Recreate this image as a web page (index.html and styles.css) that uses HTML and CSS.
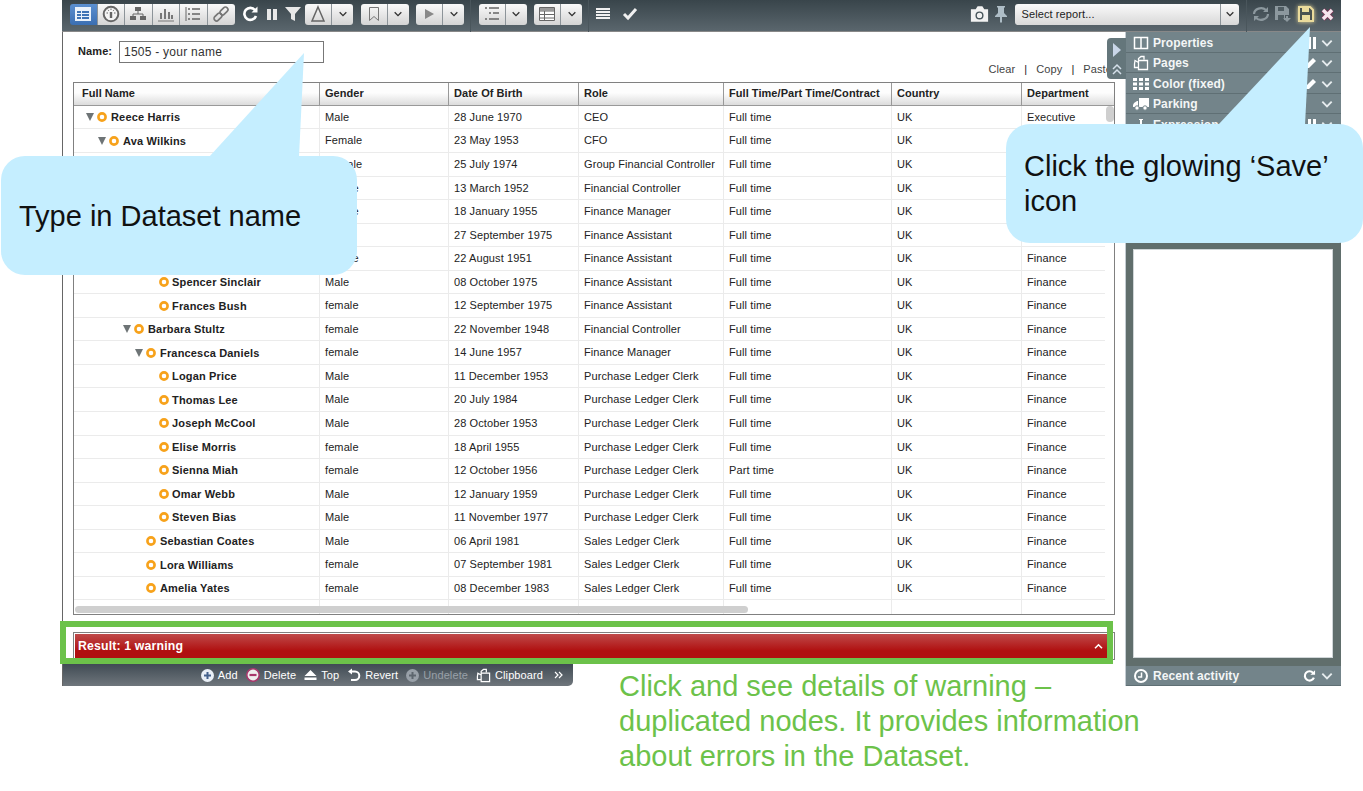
FILE: index.html
```html
<!DOCTYPE html>
<html lang="en">
<head>
  <meta charset="utf-8" />
  <title>Dataset</title>
  <link rel="stylesheet" href="styles.css">
</head>
<body>
  <svg class="sprite" width="0" height="0">
    <symbol id="chev" viewBox="0 0 12 12"><path d="M2 4l4 4 4-4" fill="none" stroke="currentColor" stroke-width="1.6"/></symbol>
    <symbol id="dot" viewBox="0 0 10 10"><circle cx="5" cy="5" r="3.6" fill="#fff" stroke="#f7a21b" stroke-width="2.6"/></symbol>
    <symbol id="pages" viewBox="0 0 16 16"><path d="M5.500 5V3.500L8 1.500h3v3M5.500 7.500L2 5.500 1.500 9v3.500H5M5.500 5.500h9v9h-9z" fill="none" stroke="#fff" stroke-width="1.300"/></symbol>
  </svg>
  <div class="app">
    <div class="toolbar">
      <div class="seg">
        <span class="seg-btn active"><svg width="18" height="16" viewBox="0 0 18 16"><path fill="#eaf2fb" d="M1 1h16v14H1z"/><path fill="#3f74b5" d="M3 5h4v2H3zM8 5h7v2H8zM3 8h4v2H3zM8 8h7v2H8zM3 11h4v2H3zM8 11h7v2H8z"/></svg></span>
        <span class="seg-btn"><svg width="18" height="18" viewBox="0 0 18 18"><circle cx="9" cy="9" r="7.300" fill="#f4f4f4" stroke="#666" stroke-width="2"/><path d="M9 7v6" stroke="#666" stroke-width="2.400"/><path d="M4.500 8h1.500M12 8h1.500M6 4.800l.8 1M12 4.800l-.8 1M9 3.500v1.500" stroke="#666"/></svg></span>
        <span class="seg-btn"><svg width="18" height="16" viewBox="0 0 18 16"><path fill="#666" d="M6 1h6v4H6zM1 10h6v4H1zM11 10h6v4h-6z"/><path d="M9 5v3M4 10V8h10v2" fill="none" stroke="#666"/></svg></span>
        <span class="seg-btn"><svg width="18" height="16" viewBox="0 0 18 16"><path fill="#777" d="M3 7h2v6H3zM7 3h2v10H7zM11 6h2v7h-2zM14 9h2v4h-2z"/><path d="M1 15h16" stroke="#777"/></svg></span>
        <span class="seg-btn"><svg width="18" height="16" viewBox="0 0 18 16"><path d="M2 1v14" stroke="#666"/><path d="M4 3h2M4 8h2M4 13h2M8 3h8M8 8h8M8 13h8" stroke="#666" stroke-width="1.500"/></svg></span>
        <span class="seg-btn"><svg width="18" height="18" viewBox="0 0 18 18"><g fill="none" stroke="#777" stroke-width="1.700"><rect x="9.500" y="1.500" width="5" height="9" rx="2.500" transform="rotate(45 12 6)"/><rect x="3.500" y="7.500" width="5" height="9" rx="2.500" transform="rotate(45 6 12)"/></g></svg></span>
      </div>
      <span class="tool first"><svg width="18" height="18" viewBox="0 0 18 18"><path d="M14 11a6 6 0 1 1-1-6" fill="none" stroke="#fff" stroke-width="2.600"/><path fill="#fff" d="M15.500 1.500v6h-6z"/></svg></span>
      <span class="tool"><svg width="16" height="16" viewBox="0 0 16 16"><path fill="#e8e8e8" d="M3 3h4v11H3zM9 3h4v11H9z"/></svg></span>
      <span class="tool"><svg width="18" height="16" viewBox="0 0 18 16"><path fill="#e8e8e8" d="M1 1h16l-6 7v7l-4-2V8z"/></svg></span>
      <div class="split"><span class="split-main"><svg width="18" height="18" viewBox="0 0 18 18"><path d="M9 2l6 14H3z" fill="none" stroke="#666" stroke-width="1.500"/></svg></span><span class="split-arrow"><svg width="10" height="10"><use href="#chev"/></svg></span></div>
      <div class="split"><span class="split-main"><svg width="16" height="16" viewBox="0 0 16 16"><path d="M3.500 1.500h9v13l-4.500-4-4.500 4z" fill="none" stroke="#777"/></svg></span><span class="split-arrow"><svg width="10" height="10"><use href="#chev"/></svg></span></div>
      <div class="split"><span class="split-main"><svg width="14" height="14" viewBox="0 0 14 14"><path d="M3 2l9 5-9 5z" fill="#888"/></svg></span><span class="split-arrow"><svg width="10" height="10"><use href="#chev"/></svg></span></div>
      <span class="sep"></span>
      <div class="split"><span class="split-main"><svg width="18" height="16" viewBox="0 0 18 16"><path d="M2 2h2M6 2h10M6 7h2M10 7h6M2 13h2M6 13h10" stroke="#666" stroke-width="1.500"/></svg></span><span class="split-arrow"><svg width="10" height="10"><use href="#chev"/></svg></span></div>
      <div class="split"><span class="split-main"><svg width="18" height="16" viewBox="0 0 18 16"><path d="M1.500 1.500h15v13h-15z" fill="#fff" stroke="#666"/><path d="M1.500 5h15M1.500 8.500h15M1.500 12h15M6.500 5v9" stroke="#666"/><path d="M2 2h14v3H2z" fill="#999"/></svg></span><span class="split-arrow"><svg width="10" height="10"><use href="#chev"/></svg></span></div>
      <span class="sep"></span>
      <span class="tool wide"><svg width="16" height="14" viewBox="0 0 16 14"><path d="M1 2h14M1 5h14M1 8h14M1 11h14" stroke="#f0f0f0" stroke-width="1.800"/></svg></span>
      <span class="tool wide"><svg width="16" height="14" viewBox="0 0 16 14"><path d="M2 7l4 4 8-9" fill="none" stroke="#f0f0f0" stroke-width="3"/></svg></span>
      <span class="spring"></span>
      <span class="tool camera"><svg width="22" height="18" viewBox="0 0 22 18"><path fill="#f2f2f2" d="M2 4h5l2-3h5l2 3h4v13H2z"/><circle cx="11" cy="10.500" r="3.500" fill="#f2f2f2" stroke="#4a575d" stroke-width="1.500"/></svg></span>
      <span class="tool pin"><svg width="14" height="18" viewBox="0 0 14 18"><path fill="#aebdc6" d="M3 1h8v1l-1 1v5l3 3v1H8v5l-1 1-1-1v-5H1v-1l3-3V3L3 2z"/></svg></span>
      <div class="report"><span class="report-text">Select report...</span><span class="report-arrow"><svg width="10" height="10"><use href="#chev"/></svg></span></div>
      <span class="sep light"></span>
      <span class="tool dim"><svg width="18" height="16" viewBox="0 0 18 16"><path d="M2 8a7 6 0 0 1 12-4M16 8a7 6 0 0 1-12 4" fill="none" stroke="#8c989e" stroke-width="2.200"/><path fill="#8c989e" d="M16 1v5h-5zM2 15v-5h5z"/></svg></span>
      <span class="tool dim"><svg width="18" height="18" viewBox="0 0 18 18"><path fill="#8c989e" d="M1 1h11l3 3v6h-4v5H1z"/><path fill="#4f5c62" d="M4 2h6v4H4zM4 10h6v5H4z"/><path fill="#8c989e" d="M12 11h2v2h3l-4 4-4-4h3z"/></svg></span>
      <span class="tool save"><svg width="18" height="18" viewBox="0 0 18 18"><path d="M2 2h11l3 3v11H2z" fill="#4a5250" stroke="#eadb9c" stroke-width="2"/><path fill="#eadb9c" d="M5 2h7v5H5zM5 10h8v6H5z"/></svg></span>
      <span class="tool"><svg width="15" height="15" viewBox="0 0 15 15"><path d="M3 3l9 9M12 3l-9 9" stroke="#7d3556" stroke-width="5"/><path d="M3 3l9 9M12 3l-9 9" stroke="#f6e6ee" stroke-width="3.400"/></svg></span>
    </div>

    <div class="workspace">
      <main class="content">
        <div class="name-row">
          <label class="name-label" for="ds">Name:</label>
          <input class="name-input" id="ds" type="text" value="1505 - your name" />
          <div class="links"><span>Clear</span><i>|</i><span>Copy</span><i>|</i><span>Paste</span></div>
        </div>

        <div class="grid-box">
          <div class="row head">
            <div class="cell name-head">Full Name</div><div class="cell">Gender</div><div class="cell">Date Of Birth</div><div class="cell">Role</div><div class="cell">Full Time/Part Time/Contract</div><div class="cell">Country</div><div class="cell">Department</div>
          </div>
          <div class="row"><div class="cell tree lv0"><b class="arrow"></b><svg class="dot"><use href="#dot"/></svg><strong>Reece Harris</strong></div><div class="cell">Male</div><div class="cell">28 June 1970</div><div class="cell">CEO</div><div class="cell">Full time</div><div class="cell">UK</div><div class="cell">Executive</div></div>
          <div class="row"><div class="cell tree lv1"><b class="arrow"></b><svg class="dot"><use href="#dot"/></svg><strong>Ava Wilkins</strong></div><div class="cell">Female</div><div class="cell">23 May 1953</div><div class="cell">CFO</div><div class="cell">Full time</div><div class="cell">UK</div><div class="cell"></div></div>
          <div class="row"><div class="cell"></div><div class="cell">Female</div><div class="cell">25 July 1974</div><div class="cell">Group Financial Controller</div><div class="cell">Full time</div><div class="cell">UK</div><div class="cell"></div></div>
          <div class="row"><div class="cell"></div><div class="cell">female</div><div class="cell">13 March 1952</div><div class="cell">Financial Controller</div><div class="cell">Full time</div><div class="cell">UK</div><div class="cell"></div></div>
          <div class="row"><div class="cell"></div><div class="cell">female</div><div class="cell">18 January 1955</div><div class="cell">Finance Manager</div><div class="cell">Full time</div><div class="cell">UK</div><div class="cell"></div></div>
          <div class="row"><div class="cell"></div><div class="cell">Male</div><div class="cell">27 September 1975</div><div class="cell">Finance Assistant</div><div class="cell">Full time</div><div class="cell">UK</div><div class="cell"></div></div>
          <div class="row"><div class="cell"></div><div class="cell">female</div><div class="cell">22 August 1951</div><div class="cell">Finance Assistant</div><div class="cell">Full time</div><div class="cell">UK</div><div class="cell">Finance</div></div>
          <div class="row"><div class="cell tree lv5"><b class="arrow none"></b><svg class="dot"><use href="#dot"/></svg><strong>Spencer Sinclair</strong></div><div class="cell">Male</div><div class="cell">08 October 1975</div><div class="cell">Finance Assistant</div><div class="cell">Full time</div><div class="cell">UK</div><div class="cell">Finance</div></div>
          <div class="row"><div class="cell tree lv5"><b class="arrow none"></b><svg class="dot"><use href="#dot"/></svg><strong>Frances Bush</strong></div><div class="cell">female</div><div class="cell">12 September 1975</div><div class="cell">Finance Assistant</div><div class="cell">Full time</div><div class="cell">UK</div><div class="cell">Finance</div></div>
          <div class="row"><div class="cell tree lv3"><b class="arrow"></b><svg class="dot"><use href="#dot"/></svg><strong>Barbara Stultz</strong></div><div class="cell">female</div><div class="cell">22 November 1948</div><div class="cell">Financial Controller</div><div class="cell">Full time</div><div class="cell">UK</div><div class="cell">Finance</div></div>
          <div class="row"><div class="cell tree lv4"><b class="arrow"></b><svg class="dot"><use href="#dot"/></svg><strong>Francesca Daniels</strong></div><div class="cell">female</div><div class="cell">14 June 1957</div><div class="cell">Finance Manager</div><div class="cell">Full time</div><div class="cell">UK</div><div class="cell">Finance</div></div>
          <div class="row"><div class="cell tree lv5"><b class="arrow none"></b><svg class="dot"><use href="#dot"/></svg><strong>Logan Price</strong></div><div class="cell">Male</div><div class="cell">11 December 1953</div><div class="cell">Purchase Ledger Clerk</div><div class="cell">Full time</div><div class="cell">UK</div><div class="cell">Finance</div></div>
          <div class="row"><div class="cell tree lv5"><b class="arrow none"></b><svg class="dot"><use href="#dot"/></svg><strong>Thomas Lee</strong></div><div class="cell">Male</div><div class="cell">20 July 1984</div><div class="cell">Purchase Ledger Clerk</div><div class="cell">Full time</div><div class="cell">UK</div><div class="cell">Finance</div></div>
          <div class="row"><div class="cell tree lv5"><b class="arrow none"></b><svg class="dot"><use href="#dot"/></svg><strong>Joseph McCool</strong></div><div class="cell">Male</div><div class="cell">28 October 1953</div><div class="cell">Purchase Ledger Clerk</div><div class="cell">Full time</div><div class="cell">UK</div><div class="cell">Finance</div></div>
          <div class="row"><div class="cell tree lv5"><b class="arrow none"></b><svg class="dot"><use href="#dot"/></svg><strong>Elise Morris</strong></div><div class="cell">female</div><div class="cell">18 April 1955</div><div class="cell">Purchase Ledger Clerk</div><div class="cell">Full time</div><div class="cell">UK</div><div class="cell">Finance</div></div>
          <div class="row"><div class="cell tree lv5"><b class="arrow none"></b><svg class="dot"><use href="#dot"/></svg><strong>Sienna Miah</strong></div><div class="cell">female</div><div class="cell">12 October 1956</div><div class="cell">Purchase Ledger Clerk</div><div class="cell">Part time</div><div class="cell">UK</div><div class="cell">Finance</div></div>
          <div class="row"><div class="cell tree lv5"><b class="arrow none"></b><svg class="dot"><use href="#dot"/></svg><strong>Omar Webb</strong></div><div class="cell">Male</div><div class="cell">12 January 1959</div><div class="cell">Purchase Ledger Clerk</div><div class="cell">Full time</div><div class="cell">UK</div><div class="cell">Finance</div></div>
          <div class="row"><div class="cell tree lv5"><b class="arrow none"></b><svg class="dot"><use href="#dot"/></svg><strong>Steven Bias</strong></div><div class="cell">Male</div><div class="cell">11 November 1977</div><div class="cell">Purchase Ledger Clerk</div><div class="cell">Full time</div><div class="cell">UK</div><div class="cell">Finance</div></div>
          <div class="row"><div class="cell tree lv4"><b class="arrow none"></b><svg class="dot"><use href="#dot"/></svg><strong>Sebastian Coates</strong></div><div class="cell">Male</div><div class="cell">06 April 1981</div><div class="cell">Sales Ledger Clerk</div><div class="cell">Full time</div><div class="cell">UK</div><div class="cell">Finance</div></div>
          <div class="row"><div class="cell tree lv4"><b class="arrow none"></b><svg class="dot"><use href="#dot"/></svg><strong>Lora Williams</strong></div><div class="cell">female</div><div class="cell">07 September 1981</div><div class="cell">Sales Ledger Clerk</div><div class="cell">Full time</div><div class="cell">UK</div><div class="cell">Finance</div></div>
          <div class="row"><div class="cell tree lv4"><b class="arrow none"></b><svg class="dot"><use href="#dot"/></svg><strong>Amelia Yates</strong></div><div class="cell">female</div><div class="cell">08 December 1983</div><div class="cell">Sales Ledger Clerk</div><div class="cell">Full time</div><div class="cell">UK</div><div class="cell">Finance</div></div>
          <div class="row last"><div class="cell"></div><div class="cell"></div><div class="cell"></div><div class="cell"></div><div class="cell"></div><div class="cell"></div><div class="cell"></div></div>
          <span class="v-thumb"></span>
          <span class="h-thumb"></span>
        </div>

        <div class="result">
          <div class="result-bar"><span>Result: 1 warning</span><svg width="9" height="7" viewBox="0 0 10 8"><path d="M1 6l4-4 4 4" fill="none" stroke="#fff" stroke-width="1.800"/></svg></div>
        </div>

        <div class="actions">
          <span class="act"><svg width="13" height="13" viewBox="0 0 13 13"><circle cx="6.500" cy="6.500" r="6.500" fill="#e9eff6"/><path d="M6.500 3v7M3 6.500h7" stroke="#44618c" stroke-width="2"/></svg>Add</span>
          <span class="act"><svg width="14" height="14" viewBox="0 0 14 14"><circle cx="7" cy="7" r="6.200" fill="#eee" stroke="#a8366b" stroke-width="1.500"/><path d="M3.500 7h7" stroke="#a8366b" stroke-width="2.200"/></svg>Delete</span>
          <span class="act"><svg width="13" height="12" viewBox="0 0 13 12"><path fill="#fff" d="M6.500 1l6 6H.5zM.5 8.500h12V11H.5z"/></svg>Top</span>
          <span class="act"><svg width="14" height="14" viewBox="0 0 14 14"><path d="M3.500 3.500H8a4.300 4.300 0 0 1 0 8.600H4" fill="none" stroke="#fff" stroke-width="2"/><path fill="#fff" d="M1 3.500l4-3v6z"/></svg>Revert</span>
          <span class="act off"><svg width="13" height="13" viewBox="0 0 13 13"><circle cx="6.500" cy="6.500" r="6.500" fill="#98a0a8"/><path d="M6.500 3v7M3 6.500h7" stroke="#5d666e" stroke-width="2"/></svg>Undelete</span>
          <span class="act"><svg width="15" height="15"><use href="#pages"/></svg>Clipboard</span>
          <span class="act more"><svg width="9" height="8" viewBox="0 0 9 8"><path d="M1 1l3 3-3 3M5 1l3 3-3 3" fill="none" stroke="#fff" stroke-width="1.200"/></svg></span>
        </div>
      </main>

      <div class="handle">
        <svg width="10" height="14" viewBox="0 0 10 14"><path fill="#c9d6e8" d="M1 0l8 7-8 7z"/></svg>
        <svg width="12" height="12" viewBox="0 0 12 12"><path d="M2 6l4-4 4 4M2 11l4-4 4 4" fill="none" stroke="#d5e0ea" stroke-width="1.500"/></svg>
      </div>

      <aside class="side">
        <div class="side-row"><svg width="16" height="14" viewBox="0 0 16 14"><path d="M1.500 1.500h13v11h-13zM8 1.500v11" fill="none" stroke="#fff" stroke-width="1.500"/></svg><span class="side-title">Properties</span><svg class="tail-ico" width="10" height="12" viewBox="0 0 10 12"><path fill="#fff" d="M1 0h3v12H1zM6 0h3v12H6z"/></svg><svg class="chev-ico" width="14" height="14"><use href="#chev"/></svg></div>
        <div class="side-row"><svg width="16" height="16"><use href="#pages"/></svg><span class="side-title">Pages</span><svg class="tail-ico" width="12" height="12" viewBox="0 0 12 12"><path fill="#fff" d="M8 1l3 3-7 7H1V8z"/></svg><svg class="chev-ico" width="14" height="14"><use href="#chev"/></svg></div>
        <div class="side-row"><svg width="16" height="14" viewBox="0 0 16 14"><path fill="#fff" d="M0 1h4v3H0zM6 1h4v3H6zM12 1h4v3h-4zM0 5.500h4v3H0zM6 5.500h4v3H6zM12 5.500h4v3h-4zM0 10h4v3H0zM6 10h4v3H6zM12 10h4v3h-4z"/></svg><span class="side-title">Color (fixed)</span><svg class="tail-ico" width="12" height="12" viewBox="0 0 12 12"><path fill="#fff" d="M8 1l3 3-7 7H1V8z"/></svg><svg class="chev-ico" width="14" height="14"><use href="#chev"/></svg></div>
        <div class="side-row"><svg width="16" height="14" viewBox="0 0 16 14"><path fill="#fff" d="M6 1h10v9H6zM1 6l3-2h1v6H0V8z"/><circle cx="4" cy="11" r="2.200" fill="#fff" stroke="#73848a"/><circle cx="12" cy="11" r="2.200" fill="#fff" stroke="#73848a"/></svg><span class="side-title">Parking</span><svg class="chev-ico" width="14" height="14"><use href="#chev"/></svg></div>
        <div class="side-row"><svg width="16" height="14" viewBox="0 0 16 14"><path fill="#fff" d="M6 1h4v1H9v4l4 7H3l4-7V2H6z"/></svg><span class="side-title">Expression</span><svg class="tail-ico" width="10" height="12" viewBox="0 0 10 12"><path fill="#fff" d="M1 0h3v12H1zM6 0h3v12H6z"/></svg><svg class="chev-ico" width="14" height="14"><use href="#chev"/></svg></div>
        <div class="side-body"><div class="side-blank"></div></div>
        <div class="side-row recent"><svg width="16" height="16" viewBox="0 0 16 16"><circle cx="8" cy="8" r="6" fill="none" stroke="#fff" stroke-width="2"/><path d="M8.500 4.500V9H5" fill="none" stroke="#fff" stroke-width="1.500"/></svg><span class="side-title">Recent activity</span><svg class="tail-ico" width="14" height="14" viewBox="0 0 18 18"><path d="M14 11a6 6 0 1 1-1-6" fill="none" stroke="#fff" stroke-width="2.800"/><path fill="#fff" d="M15.500 1.500v6h-6z"/></svg><svg class="chev-ico" width="14" height="14"><use href="#chev"/></svg></div>
      </aside>
    </div>
  </div>

  <!-- annotations on top of the screenshot -->
  <div class="frame"></div>
  <div class="callout call-name">
    <svg class="wedge" width="100" height="104" viewBox="0 0 100 104"><path fill="#c5eeff" d="M0 104L95 0 90 104z"/></svg>
    <p>Type in Dataset name</p>
  </div>
  <div class="callout call-save">
    <svg class="wedge" width="95" height="98" viewBox="0 0 95 98"><path fill="#c5eeff" d="M0 98L92 0 87 98z"/></svg>
    <p>Click the glowing ‘Save’ icon</p>
  </div>
  <p class="note">Click and see details of warning – duplicated nodes. It provides information about errors in the Dataset.</p>
</body>
</html>
```

FILE: styles.css
```css
* {
  box-sizing: border-box;
}
body {
  margin: 0;
  font-family: "Liberation Sans", Arial, sans-serif;
  font-size: 11px;
  letter-spacing: 0.1px;
  color: #222;
  background: #fff;
  height: 791px;
  overflow: hidden;
  position: relative;
}
.sprite {
  position: absolute;
}
.app {
  margin-left: 62px;
  width: 1279px;
  height: 686px;
  display: flex;
  flex-direction: column;
}

/* toolbar */
.toolbar {
  height: 32px;
  flex: none;
  display: flex;
  align-items: center;
  padding: 0 3px 3px 8px;
  background: linear-gradient(#39454b, #5a666d);
  border-bottom: 1px solid #888;
}
.toolbar svg {
  display: block;
}
.seg {
  display: flex;
  height: 21px;
}
.seg-btn {
  width: 27.5px;
  display: flex;
  align-items: center;
  justify-content: center;
  background: linear-gradient(#fafafa, #d4d4d4);
  border-right: 1px solid #8d9499;
}
.seg-btn:first-child {
  border-radius: 3px 0 0 3px;
}
.seg-btn:last-child {
  border-right: 0;
  border-radius: 0 3px 3px 0;
}
.seg-btn.active {
  background: linear-gradient(#5b8fd0, #3b6fb2);
}
.tool {
  width: 21px;
  display: flex;
  justify-content: center;
}
.tool.first {
  margin-left: 5px;
}
.tool.wide {
  width: 27px;
}
.tool.camera {
  margin-right: 1px;
}
.split {
  display: flex;
  width: 48px;
  height: 21px;
  margin-left: 7.5px;
  border-radius: 3px;
  overflow: hidden;
  background: linear-gradient(#fafafa, #d4d4d4);
}
.toolbar .tool + .split {
  margin-left: 2px;
}
.split-main {
  flex: 1;
  display: flex;
  align-items: center;
  justify-content: center;
  border-right: 1px solid #8d9499;
}
.split-arrow {
  width: 21px;
  display: flex;
  align-items: center;
  justify-content: center;
  color: #333;
}
.sep {
  width: 1px;
  height: 32px;
  margin: 3px 0 0 6px;
  background: #4a565c;
}
.sep + .split {
  margin-left: 7.5px;
}
.spring {
  flex: 1;
}
.pin {
  width: 20px;
}
.report {
  width: 224px;
  height: 21px;
  margin-left: 4px;
  display: flex;
  align-items: center;
  border-radius: 3px;
  background: linear-gradient(#fafafa, #d8d8d8);
}
.report-text {
  flex: 1;
  padding-left: 7px;
}
.report-arrow {
  width: 19px;
  height: 100%;
  display: flex;
  align-items: center;
  justify-content: center;
  border-left: 1px solid #8d9499;
  color: #333;
}
.sep.light {
  margin-left: 7px;
  margin-right: 3px;
}
.tool.dim,
.tool.save {
  width: 22.5px;
}
.tool.save svg {
  filter: drop-shadow(0 0 2px #eadb9c);
}

/* main column */
.workspace {
  flex: 1;
  display: flex;
  position: relative;
  min-height: 0;
}
.content {
  flex: 1;
  min-width: 0;
  border-left: 1px solid #666;
  display: flex;
  flex-direction: column;
  overflow: hidden;
}
.name-row {
  height: 50px;
  flex: none;
  display: flex;
  align-items: flex-start;
  padding: 9px 13px 0 15px;
}
.name-label {
  font-weight: bold;
  line-height: 21px;
  margin-right: 7px;
  width: 34px;
}
.name-input {
  width: 205px;
  height: 22px;
  border: 1px solid #777;
  padding: 0 4px;
  font: 12px "Liberation Sans", Arial, sans-serif;
  letter-spacing: 0.25px;
  color: #333;
}
.links {
  margin-left: auto;
  margin-top: 21px;
  display: flex;
  gap: 9px;
  color: #444;
  line-height: 14px;
}
.links i {
  font-style: normal;
  color: #222;
}

/* grid */
.grid-box {
  position: relative;
  margin-left: 10px;
  width: 1042px;
  height: 533px;
  flex: none;
  border: 1px solid #808080;
  overflow: hidden;
}
.row {
  display: grid;
  grid-template-columns: 245px 129px 130px 145px 168px 130px 84px;
  height: 23.55px;
  border-bottom: 1.5px solid #ebebeb;
  width: 1031px;
  line-height: 22px;
}
.row.head {
  width: 1040px;
  grid-template-columns: 245px 129px 130px 145px 168px 130px 93px;
  height: 22.9px;
  font-weight: bold;
  letter-spacing: 0.05px;
  line-height: 21px;
  background: linear-gradient(#fdfdfd 45%, #dcdcdc);
  border-bottom: 1px solid #999;
}
.row.last {
  border-bottom: 0;
}
.cell {
  padding-left: 5px;
  border-left: 1px solid #ebebeb;
  white-space: nowrap;
  overflow: hidden;
}
.head .cell {
  border-left: 1px solid #999;
}
.cell:first-child {
  border-left: 0;
}
.name-head {
  padding-left: 8px;
}
.tree {
  display: flex;
  align-items: center;
}
.tree strong {
  color: #222;
  letter-spacing: 0.17px;
}
.arrow {
  width: 0;
  height: 0;
  margin-right: 3px;
  border-style: solid;
  border-width: 8px 4.5px 0;
  border-color: #6e7476 transparent transparent;
}
.arrow.none {
  border-color: transparent;
}
.dot {
  width: 10px;
  height: 10px;
  margin-right: 4px;
  flex: none;
}
.lv0 { padding-left: 12px; }
.lv1 { padding-left: 24px; }
.lv3 { padding-left: 49px; }
.lv4 { padding-left: 61px; }
.lv5 { padding-left: 74px; }
.lv5 .dot { margin-right: 3px; }
.v-thumb {
  position: absolute;
  left: 1032px;
  top: 23px;
  width: 8px;
  height: 16px;
  border-radius: 4px;
  background: #cfcfcf;
}
.h-thumb {
  position: absolute;
  left: 1px;
  top: 523px;
  width: 673px;
  height: 7px;
  border-radius: 4px;
  background: #cfcfcf;
}

/* result bar */
.result {
  margin: 17px 0 0 10px;
  width: 1042px;
  height: 28px;
  flex: none;
  border: 1px solid #808080;
  padding: 1px;
}
.result-bar {
  height: 100%;
  display: flex;
  align-items: center;
  justify-content: space-between;
  padding: 0 10px 0 3px;
  color: #fff;
  font-size: 12.3px;
  letter-spacing: 0.15px;
  font-weight: bold;
  background: linear-gradient(#bf4a4a, #b01010 70%);
}
.actions {
  margin-top: 4px;
  width: 510px;
  height: 22px;
  flex: none;
  display: flex;
  align-items: center;
  justify-content: flex-end;
  gap: 8px;
  padding-right: 10px;
  color: #fff;
  background: linear-gradient(#404b54, #6f767c);
  border-radius: 0 0 5px 0;
}
.act {
  display: flex;
  align-items: center;
  gap: 4px;
}
.act.off {
  color: #98a0a8;
}
.act.more {
  margin-left: 3px;
}

/* collapse handle */
.handle {
  position: absolute;
  left: 1045px;
  top: 6px;
  width: 19px;
  height: 41px;
  display: flex;
  flex-direction: column;
  align-items: center;
  justify-content: center;
  gap: 6px;
  background: #64767b;
  border-radius: 4px 0 0 4px;
}

/* right panel */
.side {
  width: 216px;
  flex: none;
  display: flex;
  flex-direction: column;
  background: #606e6c;
  border-left: 1px solid #c4ccd2;
}
.side-row {
  height: 20.5px;
  flex: none;
  display: flex;
  align-items: center;
  padding: 2px 7px 0 7px;
  color: #fff;
  background: #73848a;
  border-bottom: 1px solid #5f6f74;
}
.side-title {
  flex: 1;
  margin-left: 4px;
  font-size: 12px;
  font-weight: bold;
  color: #f4f6f6;
}
.tail-ico {
  margin-right: 3px;
}
.chev-ico {
  color: #e6ecee;
}
.side-body {
  flex: 1;
  min-height: 0;
  padding: 114px 8px 8px 7px;
}
.side-blank {
  height: 100%;
  background: #fff;
  border: 1px solid #d0d6d8;
}

/* annotations */
.frame {
  position: absolute;
  left: 60px;
  top: 621px;
  width: 1053px;
  height: 43px;
  border: 6px solid #6cc24a;
}
.callout {
  position: absolute;
  width: 356px;
  height: 119px;
  border-radius: 24px;
  background: #c5eeff;
  display: flex;
  align-items: center;
  font-size: 29px;
  letter-spacing: 0;
  color: #111;
}
.callout p {
  margin: 0;
  position: relative;
}
.wedge {
  position: absolute;
  display: block;
}
.call-name {
  left: 1px;
  top: 156px;
  padding: 2px 0 0 18px;
}
.call-name .wedge {
  left: 208px;
  top: -103px;
}
.call-save {
  left: 1006px;
  top: 124px;
  width: 357px;
  padding-left: 18px;
  line-height: 35px;
}
.call-save .wedge {
  left: 212px;
  top: -97px;
}
.note {
  position: absolute;
  left: 619px;
  top: 669px;
  width: 540px;
  margin: 0;
  font-size: 29px;
  letter-spacing: 0;
  line-height: 35px;
  color: #6cc24a;
}
```
